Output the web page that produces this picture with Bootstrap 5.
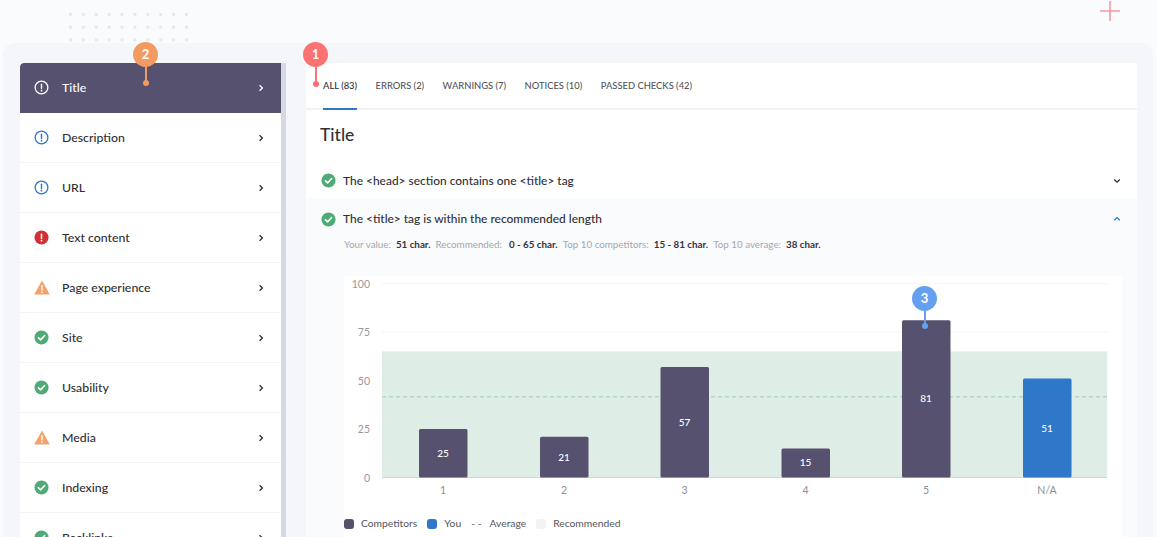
<!DOCTYPE html>
<html lang="en">
<head>
  <meta charset="UTF-8">
  <title>Title checks</title>
  <meta name="viewport" content="width=device-width, initial-scale=1.0">
  <link href="https://cdn.jsdelivr.net/npm/bootstrap@5.3.3/dist/css/bootstrap.min.css" rel="stylesheet">
  <style>
    html, body { height: 537px; overflow: hidden; }
    body {
      background: #fafbfd;
      color: #2f3035;
      font-family: "Lato", "Liberation Sans", sans-serif;
      position: relative;
    }
    .dots {
      position: absolute; left: 63.6px; top: 7.6px; width: 129px; height: 38.4px;
      background-image: radial-gradient(circle, #e6e8ef 1.4px, transparent 1.9px);
      background-size: 12.9px 12.8px;
    }
    .plus { position: absolute; left: 1100px; top: 1px; }
    .panel {
      margin: 43px 4px 0 3px;
      height: 520px;
      padding: 20px 16px 0 17px;
      background: #f4f6f9;
      border-radius: 12px 12px 0 0;
      gap: 20px;
      position: relative;
    }
    .side { width: 266px; flex: none; height: 474px; border-right: 5px solid #d5d8e6; border-radius: 4px 0 0 0; }
    .side .list-group-item {
      height: 50px;
      padding: 0 16px 0 14px;
      border: 0;
      border-bottom: 1px solid #f2f3f6;
      border-radius: 0;
      font-size: 12.3px;
      font-weight: 500;
      color: #2f3035;
      gap: 13px;
    }
    .side .list-group-item .label { padding-top: 1px; }
    .side .list-group-item.active { background: #56516f; color: #fff; border-bottom-color: #56516f; border-radius: 4px 0 0 0; }
    .side .ico { width: 15px; height: 15px; flex: none; }
    .side .tri { width: 16px; height: 15px; flex: none; margin-right: -1px; }
    .main { width: 831px; flex: none; height: 474px; background: #fff; }
    .tabs { height: 47px; border-bottom: 2px solid #f1f2f5; padding-left: 17px; gap: 18.5px; }
    .tabs .nav-link {
      padding: 0;
      height: 47px;
      line-height: 46px;
      font-size: 9.4px;
      font-weight: 500;
      color: #55565c;
      text-transform: uppercase;
      border-bottom: 2px solid transparent;
    }
    .tabs .nav-link.active { color: #2f3035; border-bottom-color: #2f77c8; }
    .heading { font-size: 17.5px; font-weight: 500; margin: 15px 0 0 14px; height: 38px; line-height: 20px; color: #2f3035; }
    .check-row { height: 35px; padding: 0 15px; gap: 7px; font-size: 11.95px; font-weight: 500; }
    .open-block .check-row { height: 42px; }
    .check-row svg.ico { width: 15px; height: 15px; flex: none; }
    .open-block { background: #fafbfd; height: 340px; }
    .stats { padding-left: 38px; font-size: 9.8px; color: #a5a7ad; height: 25px; line-height: 16px; margin-top: -4px; gap: 5px; }
    .stats b { color: #33343a; font-weight: 700; }
    .stats b:nth-of-type(2) { margin-left: 2px; }
    .chart-card { margin: 15px 15px 0 38px; background: #fff; height: 270px; }
    .chart-card svg { display: block; }
    .chart-card text { font-family: "Lato", "Liberation Sans", sans-serif; }
    .legend-row { gap: 10px; font-size: 10.3px; color: #55565c; height: 24px; }
    .swatch { width: 10px; height: 10px; border-radius: 3px; display: inline-block; margin-right: 7px; }
    .pin {
      position: absolute; width: 25px; height: 25px; border-radius: 50%; z-index: 5;
      color: #fff; font-size: 13px; font-weight: 700; text-align: center; line-height: 25px;
    }
    .pin::after {
      content: ""; position: absolute; left: 11.5px; top: 24px; width: 2px; background: inherit; height: var(--stem);
    }
    .pin::before {
      content: ""; position: absolute; left: 9.5px; top: calc(21px + var(--stem)); width: 6px; height: 6px; border-radius: 50%; background: inherit;
    }
    .pin-1 { left: 303px; top: 42px; background: #fc7273; --stem: 18px; }
    .pin-2 { left: 133px; top: 42px; background: #f39a60; --stem: 17px; }
    .pin-3 { left: 912px; top: 286px; background: #65a0f0; --stem: 16px; }
  </style>
</head>
<body>
  <svg width="0" height="0" class="position-absolute">
    <symbol id="i-info" viewBox="0 0 16 16"><circle cx="8" cy="8" r="6.8" fill="none" stroke="currentColor" stroke-width="1.4"/><path d="M8 4.4v4.6" stroke="currentColor" stroke-width="1.5" stroke-linecap="round"/><circle cx="8" cy="11.4" r=".95" fill="currentColor"/></symbol>
    <symbol id="i-err" viewBox="0 0 16 16"><circle cx="8" cy="8" r="7.5" fill="#d32f35"/><path d="M8 4.4v4.6" stroke="#fff" stroke-width="1.6" stroke-linecap="round"/><circle cx="8" cy="11.4" r="1" fill="#fff"/></symbol>
    <symbol id="i-ok" viewBox="0 0 16 16"><circle cx="8" cy="8" r="7.5" fill="#4fab76"/><path d="M4.6 8.2l2.4 2.3 4.4-4.6" fill="none" stroke="#fff" stroke-width="1.7" stroke-linecap="round" stroke-linejoin="round"/></symbol>
    <symbol id="i-warn" viewBox="0 0 16 15"><path d="M8 .6L15.8 14.6H.2z" fill="#f4a26a"/><path d="M8 5.6v4.4" stroke="#fff" stroke-width="1.4" stroke-linecap="round"/><circle cx="8" cy="12.2" r=".85" fill="#fff"/></symbol>
    <symbol id="i-next" viewBox="0 0 8 10"><path d="M2.6 2.2L5.4 5 2.6 7.8" fill="none" stroke="currentColor" stroke-width="1.3"/></symbol>
  </svg>

  <div class="dots"></div>
  <svg class="plus" width="20" height="20" viewBox="0 0 20 20"><path d="M10 0v20M0 10h20" stroke="#f59a9e" stroke-width="1.6"/></svg>

  <div class="panel d-flex">
    <div class="side overflow-hidden">
      <div class="list-group" id="side-list"></div>
    </div>

    <div class="main overflow-hidden">
      <ul class="nav tabs">
        <li class="nav-item"><a class="nav-link active" href="#">All (83)</a></li>
        <li class="nav-item"><a class="nav-link" href="#">Errors (2)</a></li>
        <li class="nav-item"><a class="nav-link" href="#">Warnings (7)</a></li>
        <li class="nav-item"><a class="nav-link" href="#">Notices (10)</a></li>
        <li class="nav-item"><a class="nav-link" href="#">Passed checks (42)</a></li>
      </ul>
      <h2 class="heading">Title</h2>

      <div class="check-row d-flex align-items-center">
        <svg class="ico"><use href="#i-ok"/></svg>
        <span class="flex-fill">The &lt;head&gt; section contains one &lt;title&gt; tag</span>
        <svg width="10" height="10" viewBox="0 0 10 10"><path d="M2.2 3.6L5 6.2l2.8-2.6" fill="none" stroke="#2f3035" stroke-width="1.3"/></svg>
      </div>

      <div class="open-block">
        <div class="check-row d-flex align-items-center">
          <svg class="ico"><use href="#i-ok"/></svg>
          <span class="flex-fill">The &lt;title&gt; tag is within the recommended length</span>
          <svg width="10" height="10" viewBox="0 0 10 10"><path d="M2.2 6.2L5 3.6l2.8 2.6" fill="none" stroke="#2f77c8" stroke-width="1.3"/></svg>
        </div>
        <div class="stats d-flex">
          <span>Your value:</span><b>51 char.</b>
          <span>Recommended:</span><b>0 - 65 char.</b>
          <span>Top 10 competitors:</span><b>15 - 81 char.</b>
          <span>Top 10 average:</span><b>38 char.</b>
        </div>
        <div class="chart-card">
          <svg id="chart" width="777" height="236" viewBox="344 276 777 236"></svg>
          <div class="legend-row d-flex align-items-center">
            <span class="d-flex align-items-center"><i class="swatch" style="background:#56516f"></i>Competitors</span>
            <span class="d-flex align-items-center"><i class="swatch" style="background:#2f77c8"></i>You</span>
            <span class="d-flex align-items-center"><span class="me-2">- -</span>Average</span>
            <span class="d-flex align-items-center"><i class="swatch" style="background:#f1f3f4"></i>Recommended</span>
          </div>
        </div>
      </div>
    </div>
  </div>

  <div class="pin pin-1">1</div>
  <div class="pin pin-2">2</div>
  <div class="pin pin-3">3</div>

  <script>
    const items = [
      ['Title', 'i-info', '#fff'], ['Description', 'i-info', '#2f77c8'], ['URL', 'i-info', '#2f77c8'],
      ['Text content', 'i-err'], ['Page experience', 'i-warn'], ['Site', 'i-ok'], ['Usability', 'i-ok'],
      ['Media', 'i-warn'], ['Indexing', 'i-ok'], ['Backlinks', 'i-ok']
    ];
    document.getElementById('side-list').innerHTML = items.map((it, n) => {
      const cls = it[1] === 'i-warn' ? 'tri' : 'ico';
      const col = it[2] ? `style="color:${it[2]}"` : '';
      return `<a href="#" class="list-group-item d-flex align-items-center ${n === 0 ? 'active' : ''}">
        <svg class="${cls}" ${col}><use href="#${it[1]}"/></svg>
        <span class="label flex-fill">${it[0]}</span>
        <svg width="8" height="10"><use href="#i-next"/></svg>
      </a>`;
    }).join('');

    // chart drawn in page coordinates, 0 at y=477.5 and 100 at y=283.5
    const Y = v => 477.5 - v * 1.94;
    let s = '';
    [100, 75, 50, 25].forEach(v => { s += `<rect x="382" y="${Y(v) - .5}" width="725" height="1.2" fill="#f4f5f7"/>`; });
    s += `<rect x="382" y="${Y(65)}" width="725" height="${65 * 1.94}" fill="#deede5"/>`;
    s += `<line x1="382" x2="1107" y1="396.8" y2="396.8" stroke="#a9cdb9" stroke-dasharray="4 3"/>`;
    s += `<rect x="382" y="477" width="725" height="1" fill="#ced6dc"/>`;
    [100, 75, 50, 25, 0].forEach(v => { s += `<text x="370" y="${Y(v) + 4}" text-anchor="end" font-size="10.5" fill="#97989e">${v}</text>`; });
    [['1', 25, 419], ['2', 21, 540], ['3', 57, 660.5], ['4', 15, 781.5], ['5', 81, 902], ['N/A', 51, 1023]].forEach(b => {
      const h = b[1] * 1.94, col = b[0] === 'N/A' ? '#2f77c8' : '#56516f', cx = b[2] + 24;
      s += `<rect x="${b[2]}" y="${477.5 - h}" width="48.5" height="${h}" rx="1.5" fill="${col}"/>`;
      s += `<text x="${cx}" y="${477.5 - h / 2 + 3.5}" text-anchor="middle" font-size="10" font-weight="500" fill="#fff">${b[1]}</text>`;
      s += `<text x="${cx}" y="494" text-anchor="middle" font-size="10.5" fill="#8d8e94">${b[0]}</text>`;
    });
    document.getElementById('chart').innerHTML = s;
  </script>
  <script src="https://cdn.jsdelivr.net/npm/bootstrap@5.3.3/dist/js/bootstrap.bundle.min.js"></script>
</body>
</html>
